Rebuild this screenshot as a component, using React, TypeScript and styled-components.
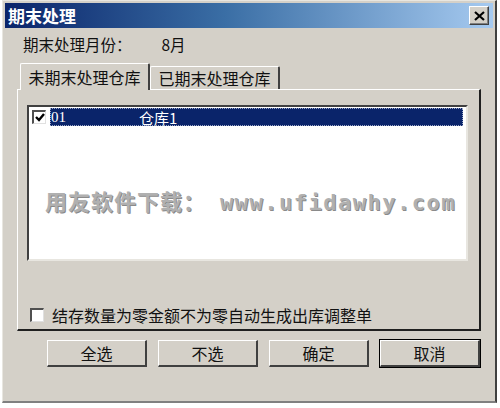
import React from "react";
import styled, { createGlobalStyle } from "styled-components";

const Global = createGlobalStyle`
  html, body { margin: 0; padding: 0; background: #ffffff; }
  body { font-family: "Noto Sans CJK SC", "Liberation Sans", sans-serif; }
`;

const Window = styled.div`
  box-sizing: border-box;
  margin-left: 2px;
  width: 495px;
  height: 403px;
  background: #d4d0c8;
  border-top: 1px solid #e8e6e0;
  border-left: 1px solid #e8e6e0;
  border-right: 2px solid #404040;
  border-bottom: 2px solid #808080;
  padding: 2px 2px 0 2px;
  display: flex;
  flex-direction: column;
`;

const TitleBar = styled.div`
  height: 25px;
  background: linear-gradient(to right, #0a246a 0%, #3a6ea5 45%, #a6caf0 100%);
  display: flex;
  align-items: center;
  justify-content: space-between;
  padding: 0 4px 0 3px;
`;

const TitleText = styled.span`
  color: #ffffff;
  font-weight: bold;
  font-size: 17px;
`;

const CloseButton = styled.div`
  box-sizing: border-box;
  width: 20px;
  height: 19px;
  background: #d4d0c8;
  border-top: 1px solid #ffffff;
  border-left: 1px solid #ffffff;
  border-right: 1px solid #404040;
  border-bottom: 1px solid #404040;
  box-shadow: inset -1px -1px 0 #808080;
  display: flex;
  align-items: center;
  justify-content: center;
`;

const Body = styled.div`
  flex: 1;
  display: flex;
  flex-direction: column;
  padding: 0 12px 0 12px;
`;

const MonthRow = styled.div`
  display: flex;
  align-items: center;
  height: 32px;
  padding-left: 6px;
  font-size: 15.5px;
  color: #111;
`;

const MonthValue = styled.span`
  margin-left: 30px;
`;

const Tabs = styled.div`
  display: flex;
  align-items: flex-end;
  height: 29px;
  padding-left: 3px;
`;

const Tab = styled.div<{ $active?: boolean }>`
  box-sizing: border-box;
  width: 130px;
  height: ${(p) => (p.$active ? 27 : 23)}px;
  font-size: 16px;
  color: #111;
  display: flex;
  align-items: center;
  justify-content: center;
  background: #d4d0c8;
  border-top: 1px solid #ffffff;
  border-left: 1px solid #ffffff;
  border-right: 2px solid #404040;
  border-top-left-radius: 2px;
  border-top-right-radius: 2px;
  margin-bottom: ${(p) => (p.$active ? -1 : 0)}px;
  position: relative;
  z-index: ${(p) => (p.$active ? 1 : 0)};
`;

const Panel = styled.div`
  box-sizing: border-box;
  height: 242px;
  border-top: 1px solid #ffffff;
  border-left: 1px solid #ffffff;
  border-right: 2px solid #202020;
  border-bottom: 2px solid #202020;
  display: flex;
  flex-direction: column;
  padding: 15px 11px 0 9px;
`;

const ListBox = styled.div`
  box-sizing: border-box;
  height: 156px;
  background: #ffffff;
  border-top: 2px solid #404040;
  border-left: 2px solid #404040;
  border-right: 2px solid #e8e6e0;
  border-bottom: 2px solid #e8e6e0;
  padding: 1px 3px 0 3px;
  position: relative;
  overflow: hidden;
`;

const Row = styled.div`
  display: flex;
  align-items: center;
  height: 18px;
`;

const CheckBox = styled.div`
  box-sizing: border-box;
  width: 14px;
  height: 14px;
  background: #ffffff;
  border-top: 2px solid #505050;
  border-left: 2px solid #505050;
  border-right: 1px solid #e0e0e0;
  border-bottom: 1px solid #e0e0e0;
  display: flex;
  align-items: center;
  justify-content: center;
  flex: none;
`;

const Selected = styled.div`
  flex: 1;
  height: 18px;
  margin-left: 4px;
  background: #0a246a;
  outline: 1px dotted #9aa6c8;
  outline-offset: -1px;
  color: #ffffff;
  font-size: 15px;
  display: flex;
  align-items: center;
`;

const CodeCell = styled.span`
  width: 88px;
  padding-left: 1px;
  font-family: "Liberation Serif", serif;
  font-size: 15px;
`;

const Watermark = styled.div`
  position: absolute;
  left: 16px;
  top: 77px;
  font-size: 22px;
  font-weight: bold;
  color: #b0b0b0;
  text-shadow: 1px 1px 0 #8a8a8a;
  white-space: nowrap;
  letter-spacing: 1px;
`;

const WatermarkUrl = styled.span`
  font-family: "DejaVu Sans Mono", monospace;
  font-size: 22px;
  letter-spacing: 1.5px;
  margin-left: 14px;
`;

const OptionRow = styled.div`
  display: flex;
  align-items: center;
  margin-top: 42px;
  padding-left: 3px;
  font-size: 16px;
  color: #111;
`;

const OptionLabel = styled.span`
  margin-left: 8px;
`;

const ButtonRow = styled.div`
  display: flex;
  gap: 11px;
  padding-left: 30px;
  margin-top: 9px;
`;

const Button = styled.div<{ $default?: boolean }>`
  box-sizing: border-box;
  width: 100px;
  height: 27px;
  font-size: 16px;
  color: #111;
  display: flex;
  align-items: center;
  justify-content: center;
  background: #d4d0c8;
  border-top: 1px solid #ffffff;
  border-left: 1px solid #ffffff;
  border-right: 2px solid #404040;
  border-bottom: 2px solid #404040;
  outline: ${(p) => (p.$default ? "1px solid #000" : "none")};
`;

export default function App() {
  return (
    <>
      <Global />
      <Window>
        <TitleBar>
          <TitleText>期末处理</TitleText>
          <CloseButton>
            <svg width="11" height="10" viewBox="0 0 11 10">
              <path d="M1 1 L10 9 M10 1 L1 9" stroke="#000" strokeWidth="2.2" />
            </svg>
          </CloseButton>
        </TitleBar>
        <Body>
          <MonthRow>
            期末处理月份：<MonthValue>8月</MonthValue>
          </MonthRow>
          <Tabs>
            <Tab $active>未期末处理仓库</Tab>
            <Tab>已期末处理仓库</Tab>
          </Tabs>
          <Panel>
            <ListBox>
              <Row>
                <CheckBox>
                  <svg width="10" height="9" viewBox="0 0 10 9">
                    <path d="M1 4 L4 7 L9 1" stroke="#000" strokeWidth="2.4" fill="none" />
                  </svg>
                </CheckBox>
                <Selected>
                  <CodeCell>01</CodeCell>
                  <span>仓库1</span>
                </Selected>
              </Row>
              <Watermark>
                用友软件下载：<WatermarkUrl>www.ufidawhy.com</WatermarkUrl>
              </Watermark>
            </ListBox>
            <OptionRow>
              <CheckBox />
              <OptionLabel>结存数量为零金额不为零自动生成出库调整单</OptionLabel>
            </OptionRow>
          </Panel>
          <ButtonRow>
            <Button>全选</Button>
            <Button>不选</Button>
            <Button>确定</Button>
            <Button $default>取消</Button>
          </ButtonRow>
        </Body>
      </Window>
    </>
  );
}
